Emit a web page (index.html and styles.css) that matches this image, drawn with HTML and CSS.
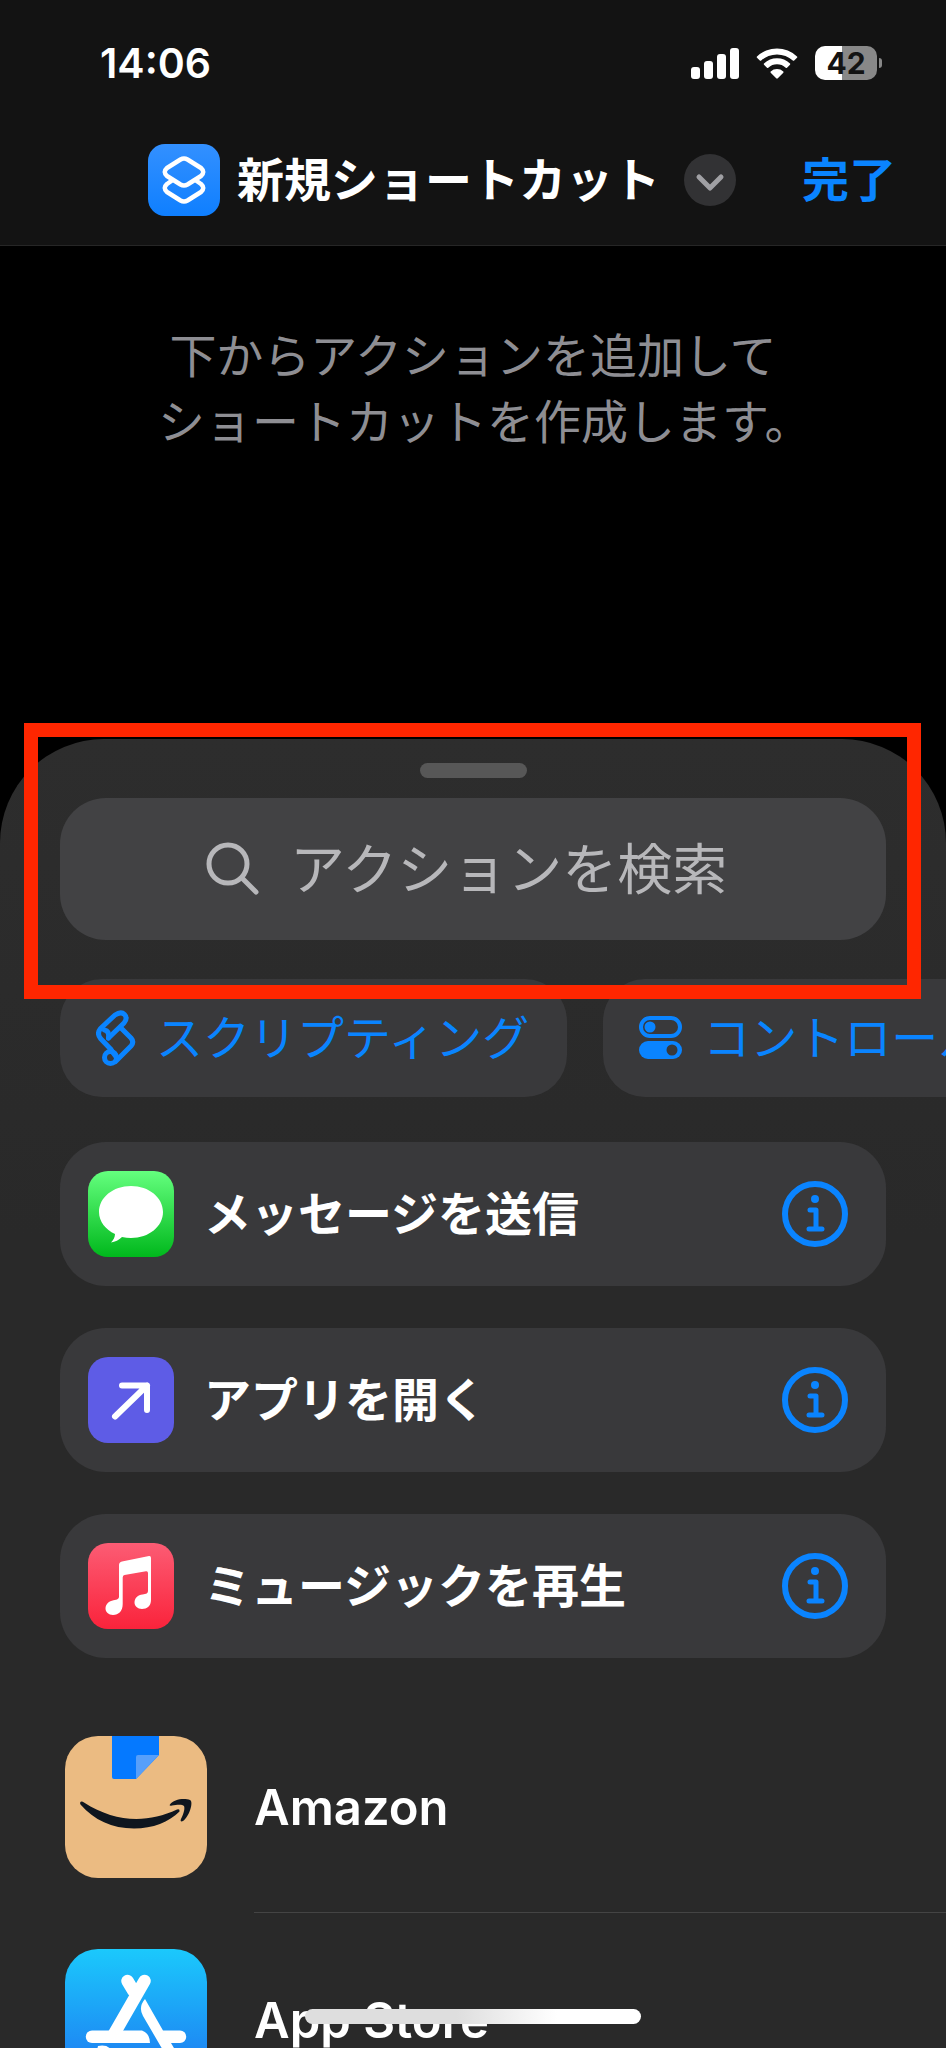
FILE: index.html
```html
<!DOCTYPE html>
<html lang="ja">
<head>
  <meta charset="utf-8">
  <meta name="viewport" content="width=device-width, initial-scale=1">
  <title>新規ショートカット</title>
  <link rel="stylesheet" href="styles.css">
</head>
<body>
  <header class="top">
    <div class="status">
      <time class="clock">14:06</time>
      <div class="indicators">
        <svg class="signal" viewBox="0 0 48 32" aria-hidden="true">
          <rect x="0" y="20" width="9" height="12" rx="3"/>
          <rect x="13" y="14" width="9" height="18" rx="3"/>
          <rect x="26" y="7" width="9" height="25" rx="3"/>
          <rect x="39" y="1" width="9" height="31" rx="3"/>
        </svg>
        <svg class="wifi" viewBox="0 0 42 32" aria-hidden="true">
          <path d="M1 9.500a29 29 0 0 1 40 0q.6.600 0 1.300l-2.800 2.700q-.7.600-1.400 0a23.500 23.500 0 0 0-31.600 0q-.7.600-1.400 0L1 10.800q-.6-.7 0-1.300z"/>
          <path d="M8 16.500a19 19 0 0 1 26 0q.6.600 0 1.300l-3 2.900q-.6.600-1.300 0a13 13 0 0 0-17.400 0q-.7.600-1.300 0l-3-2.900q-.6-.7 0-1.300z"/>
          <path d="M14.700 24.500a9.500 9.500 0 0 1 12.600 0q.6.600 0 1.300l-5.500 5.500q-.8.700-1.600 0l-5.500-5.500q-.6-.7 0-1.300z"/>
        </svg>
        <div class="battery"><span class="level">42</span></div>
      </div>
    </div>
    <div class="navbar">
      <svg class="app-icon" viewBox="0 0 72 72" aria-hidden="true">
        <defs>
          <linearGradient id="shortcut" x1="0" y1="0" x2="0" y2="1">
            <stop offset="0" stop-color="#3390ff"/>
            <stop offset="1" stop-color="#0f7fff"/>
          </linearGradient>
        </defs>
        <rect width="72" height="72" rx="17" fill="url(#shortcut)"/>
        <g fill="none" stroke="#fff" stroke-width="4.500" stroke-linejoin="round">
          <path d="M32.500 15.500q3.500-2 7 0L53 24q4.500 4 0 8l-13.500 8.500q-3.500 2-7 0L19 32q-4.500-4 0-8z"/>
          <path d="M24 36.500l-5 3.500q-4.500 4 0 8l13.500 8.500q3.500 2 7 0L53 48q4.500-4 0-8l-5-3.500"/>
        </g>
      </svg>
      <h1 class="title">新規ショートカット</h1>
      <button class="expand" type="button" aria-label="メニュー">
        <svg viewBox="0 0 52 52" aria-hidden="true"><path d="M15 23l11 11 11-11"/></svg>
      </button>
      <button class="done" type="button">完了</button>
    </div>
  </header>

  <main>
    <p class="hint">下からアクションを追加して<br>ショートカットを作成します。</p>

    <section class="sheet">
      <div class="grabber"></div>
      <label class="search">
        <svg viewBox="0 0 54 54" aria-hidden="true"><circle cx="22" cy="22" r="19"/><path d="M36 36l14 14"/></svg>
        <input type="text" placeholder="アクションを検索" aria-label="アクションを検索">
      </label>

      <div class="chips">
        <button class="chip" type="button">
          <svg class="script" viewBox="0 0 40 56" aria-hidden="true">
            <path d="M12.500 28L28 13q4-5 .5-8.500T19 5L4.500 18.500q-4 5 0 10L15 39.500"/>
            <path d="M12.500 28q1-7-4-8"/>
            <path d="M24.500 17.500L35 28q3.500 4 0 8L19.500 51.500"/>
            <circle cx="14.500" cy="47.500" r="6"/>
            <path d="M15 40l6 8"/>
          </svg>
          スクリプティング
        </button>
        <button class="chip" type="button">
          <svg class="toggles" viewBox="0 0 44 44" aria-hidden="true">
            <rect x="2" y="2" width="39" height="18" rx="9" fill="none" stroke="#0a84ff" stroke-width="4"/>
            <circle cx="11" cy="11" r="5.500" fill="#0a84ff"/>
            <rect x="0" y="25" width="43" height="18" rx="9" fill="#0a84ff"/>
            <circle cx="33" cy="34" r="5.500" fill="#39393b"/>
          </svg>
          コントロール
        </button>
      </div>

      <ul class="actions">
        <li class="action">
          <svg class="action-icon" viewBox="0 0 86 86" aria-hidden="true">
            <defs>
              <linearGradient id="green" x1="0" y1="0" x2="0" y2="1">
                <stop offset="0" stop-color="#64ff7e"/>
                <stop offset="1" stop-color="#00b81c"/>
              </linearGradient>
            </defs>
            <rect width="86" height="86" rx="20" fill="url(#green)"/>
            <path fill="#fff" d="M43 15c18 0 32 11.500 32 26S61 67 43 67c-3 0-6-.3-9-1-3 3-7 5-11 5.500 2.500-2.500 4-5.500 4-8.500C17.500 58.500 11 50.500 11 41c0-14.500 14-26 32-26z"/>
          </svg>
          <span class="action-name">メッセージを送信</span>
          <button class="info" type="button" aria-label="メッセージを送信の情報">
            <svg viewBox="0 0 66 66" aria-hidden="true"><circle cx="33" cy="33" r="30"/><path d="M28 29h6v19M27 48h13"/><circle class="dot" cx="33" cy="18" r="4"/></svg>
          </button>
        </li>
        <li class="action">
          <svg class="action-icon" viewBox="0 0 86 86" aria-hidden="true">
            <rect width="86" height="86" rx="20" fill="#5e5ce6"/>
            <path d="M34 28.500h25V53M59 28.500L27 59.500" fill="none" stroke="#fff" stroke-width="6" stroke-linecap="round" stroke-linejoin="round"/>
          </svg>
          <span class="action-name">アプリを開く</span>
          <button class="info" type="button" aria-label="アプリを開くの情報">
            <svg viewBox="0 0 66 66" aria-hidden="true"><circle cx="33" cy="33" r="30"/><path d="M28 29h6v19M27 48h13"/><circle class="dot" cx="33" cy="18" r="4"/></svg>
          </button>
        </li>
        <li class="action">
          <svg class="action-icon" viewBox="0 0 86 86" aria-hidden="true">
            <defs>
              <linearGradient id="red" x1="0" y1="0" x2="0" y2="1">
                <stop offset="0" stop-color="#fc5c74"/>
                <stop offset="1" stop-color="#fa233b"/>
              </linearGradient>
            </defs>
            <rect width="86" height="86" rx="20" fill="url(#red)"/>
            <path fill="#fff" d="M31 22q0-3 3-3.500L61 13q2-.3 2 2v42c0 6-4 9-9 9-4.500 0-7.500-3-7.500-6.500 0-4.500 3.500-7.500 8-8 4-.5 5.500-1 5.500-4V30q0-2-2-1.700L36.500 32q-1.800.4-1.800 2.500V61c0 7-4 11-9.700 11-4.500 0-7.500-3-7.500-6.500 0-4.500 3.500-7.500 8-8.300 4-.7 5.500-1.200 5.500-4z"/>
          </svg>
          <span class="action-name">ミュージックを再生</span>
          <button class="info" type="button" aria-label="ミュージックを再生の情報">
            <svg viewBox="0 0 66 66" aria-hidden="true"><circle cx="33" cy="33" r="30"/><path d="M28 29h6v19M27 48h13"/><circle class="dot" cx="33" cy="18" r="4"/></svg>
          </button>
        </li>
      </ul>

      <ul class="apps">
        <li class="app">
          <svg class="store-icon" viewBox="0 0 142 142" aria-hidden="true">
            <rect width="142" height="142" rx="33" fill="#ebbb82"/>
            <path d="M47 0h47v19L71 43H49q-2 0-2-2z" fill="#0579ff"/>
            <path d="M71 43V21q0-2 2-2h21z" fill="#579ffa"/>
            <path d="M15 67q1-2.500 4-.5c31 20 63 21 93 7q3-1 2.500 2C104 86 88 92.500 69 92.500 47 92.500 29 84 15.500 68.500z" fill="#0f161f"/>
            <path d="M105 68.500c3-5 14-7 20-4.500 4 2-1 17-7 21-2 1-3 0-2-2 3-6 4-11 3-13-2-2-8-1-12-.5-2 .5-3 0-2-1z" fill="#0f161f"/>
          </svg>
          <a class="app-name" href="#amazon">Amazon</a>
        </li>
        <li class="app">
          <svg class="store-icon" viewBox="0 0 142 142" aria-hidden="true">
            <defs>
              <linearGradient id="blue" x1="0" y1="0" x2="0" y2="1">
                <stop offset="0" stop-color="#1bc9fc"/>
                <stop offset="1" stop-color="#1e70f0"/>
              </linearGradient>
            </defs>
            <rect width="142" height="142" rx="33" fill="url(#blue)"/>
            <path d="M79.500 32L49 85M62.500 32l6 10" stroke="#fff" stroke-width="12.500" stroke-linecap="round"/>
            <g fill="#fff">
              <path d="M27 81.500h50q8 3 8 12.500H27a6.200 6.200 0 0 1 0-12.500z"/>
              <path d="M80 50l18 31.500h17a6.200 6.200 0 0 1 0 12.500h-9l10 17q2 5-3 7-4 1-7-3L78 67q-5-9 2-17z"/>
              <path d="M33 97q10-2 14 5l-5 9q-4 5-9 2-4-3-2-8z"/>
            </g>
          </svg>
          <a class="app-name" href="#appstore">App Store</a>
        </li>
      </ul>
    </section>
  </main>

  <div class="highlight"></div>
  <div class="home-bar"></div>
</body>
</html>
```

FILE: styles.css
```css
* { box-sizing: border-box; }
html { height: 100%; overflow: hidden; background: #000; }
body { position: relative; height: 100%; margin: 0; overflow: hidden; background: #000; color: #fff; font-family: Inter, "Noto Sans CJK JP", sans-serif; font-size: 47px; line-height: 72px; }
button { padding: 0; border: none; background: none; color: #0a84ff; font: inherit; cursor: pointer; }
ul { margin: 0; padding: 0; list-style: none; }
svg { display: block; flex: none; }

.top { background: #131313; border-bottom: 1px solid #262626; }
.status { display: flex; justify-content: space-between; align-items: center; height: 126px; padding: 0 64px 0 100px; }
.clock { font-size: 41px; font-weight: 600; }
.indicators { display: flex; align-items: center; gap: 17px; }
.signal { width: 48px; height: 32px; fill: #fff; }
.wifi { width: 42px; height: 32px; fill: #fff; }
.battery { display: flex; align-items: center; gap: 2px; }
.battery::after { content: ""; width: 3px; height: 10px; border-radius: 0 3px 3px 0; background: #888; }
.level { width: 62px; border-radius: 10px; background: linear-gradient(90deg, #fff 43%, #888 43%); color: #131313; font-size: 30px; font-weight: 700; line-height: 34px; text-align: center; }

.navbar { display: flex; align-items: center; height: 119px; padding: 0 50px 12px 148px; }
.app-icon { width: 72px; height: 72px; }
.title { margin: 0 0 0 17px; font-size: 47px; font-weight: 600; white-space: nowrap; }
.expand { width: 52px; height: 52px; margin-left: 24px; border-radius: 50%; background: #323234; }
.expand path { fill: none; stroke: #a0a0a4; stroke-width: 5; stroke-linecap: round; stroke-linejoin: round; }
.done { margin-left: auto; font-weight: 600; }

.hint { height: 493px; margin: 0; padding-top: 77px; color: #8e8e93; line-height: 66px; text-align: center; font-feature-settings: "halt"; }

.sheet { padding: 24px 60px 0; border-radius: 104px 104px 0 0; background: linear-gradient(#2d2d2d, #292929 500px); }
.grabber { width: 107px; height: 15px; margin: 0 auto 20px; border-radius: 8px; background: #575757; }
.search { display: flex; align-items: center; justify-content: center; gap: 30px; height: 142px; border-radius: 46px; background: #424244; }
.search svg { width: 54px; height: 54px; fill: none; stroke: #b7b7ba; stroke-width: 5; stroke-linecap: round; }
.search input { width: 450px; padding: 0; border: none; outline: none; background: none; color: #fff; font: inherit; font-size: 55px; }
.search input::placeholder { color: #b7b7ba; opacity: 1; }

.chips { display: flex; gap: 36px; margin: 39px -60px 45px 0; overflow-x: auto; scrollbar-width: none; }
.chip { display: flex; flex: none; align-items: center; gap: 20px; height: 118px; padding: 0 38px 0 36px; border-radius: 42px; background: #39393b; }
.script { width: 40px; height: 56px; fill: none; stroke: #0a84ff; stroke-width: 5; stroke-linecap: round; stroke-linejoin: round; }
.toggles { width: 44px; height: 44px; }

.actions { display: grid; gap: 42px; }
.action { display: flex; align-items: center; height: 144px; padding: 0 38px 0 28px; border-radius: 46px; background: #39393b; }
.action-icon { width: 86px; height: 86px; margin-right: 30px; }
.action-name { font-weight: 600; }
.info { width: 66px; height: 66px; margin-left: auto; }
.info svg { fill: none; stroke: #0a84ff; stroke-width: 5; stroke-linecap: round; stroke-linejoin: round; }
.info svg > circle:first-child { stroke-width: 6; }
.info .dot { fill: #0a84ff; stroke: none; }

.apps { margin: 42px -60px 0 0; }
.app { display: flex; align-items: center; gap: 47px; height: 213px; padding-left: 5px; }
.store-icon { width: 142px; height: 142px; }
.app-name { display: flex; flex: 1; align-items: center; height: 100%; padding-top: 4px; border-bottom: 1px solid #444; color: #fff; font-size: 49px; font-weight: 600; text-decoration: none; }

/* drawn over the page */
.highlight { position: absolute; top: 723px; left: 24px; right: 25px; height: 276px; border: 14px solid #ff2600; }
.home-bar { position: absolute; bottom: 24px; left: 50%; width: 336px; height: 15px; margin-left: -168px; border-radius: 8px; background: linear-gradient(90deg, #dedede 45%, #fff 75%); }
```
